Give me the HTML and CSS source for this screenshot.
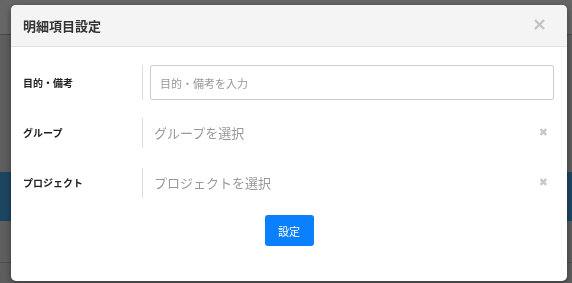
FILE: index.html
```html
<!DOCTYPE html>
<html lang="ja">
<head>
  <meta charset="UTF-8">
  <title>明細項目設定</title>
  <link rel="stylesheet" href="styles.css">
</head>
<body>
  <div class="backdrop">
    <div class="bg-top"></div>
    <div class="bg-gap"></div>
    <div class="bg-band"></div>
    <div class="bg-gap2"></div>
    <div class="bg-line"></div>
  </div>

  <div class="modal">
    <div class="modal-header">
      <h2>明細項目設定</h2>
      <span class="close">×</span>
    </div>
    <div class="modal-body">
      <div class="row">
        <label>目的・備考</label>
        <div class="field">
          <input type="text" placeholder="目的・備考を入力">
        </div>
      </div>
      <div class="row">
        <label>グループ</label>
        <div class="field select">
          <span class="placeholder">グループを選択</span>
          <span class="clear">✖</span>
        </div>
      </div>
      <div class="row">
        <label>プロジェクト</label>
        <div class="field select">
          <span class="placeholder">プロジェクトを選択</span>
          <span class="clear">✖</span>
        </div>
      </div>
      <div class="actions">
        <button>設定</button>
      </div>
    </div>
  </div>
</body>
</html>
```

FILE: styles.css
```css
body {
  margin: 0;
  font-family: "Noto Sans CJK JP", "Noto Sans", sans-serif;
  background: #5e5e5e;
  height: 283px;
  overflow: hidden;
}

.backdrop {
  display: flex;
  flex-direction: column;
}

.bg-top {
  height: 34px;
  border-bottom: 1px solid #4a4a4a;
  background: #666;
}

.bg-gap {
  height: 137px;
}

.bg-band {
  height: 49px;
  background: #1c4660;
}

.bg-gap2 {
  height: 41px;
}

.bg-line {
  height: 1px;
  background: #3c5060;
}

.modal {
  position: fixed;
  left: 11px;
  top: 5px;
  width: 556px;
  height: 276px;
  background: #fff;
  border-radius: 5px;
  box-shadow: 0 2px 6px rgba(0, 0, 0, 0.4);
  overflow: hidden;
}

.modal-header {
  display: flex;
  align-items: center;
  justify-content: space-between;
  height: 41px;
  padding: 0 20px 0 12px;
  background: #f4f4f4;
  border-bottom: 1px solid #e3e3e3;
}

.modal-header h2 {
  margin: 0;
  font-size: 13px;
  font-weight: 700;
  color: #333;
}

.close {
  font-family: "DejaVu Sans", sans-serif;
  font-size: 18px;
  font-weight: 700;
  color: #c2c2c2;
  margin-top: -5px;
}

.modal-body {
  padding: 18px 13px 0 12px;
}

.row {
  display: flex;
  align-items: center;
  height: 35px;
  margin-bottom: 14px;
}

.row + .row {
  padding-top: 1px;
}

.row label {
  width: 119px;
  font-size: 10px;
  font-weight: 700;
  color: #222;
}

.field {
  flex: 1;
  height: 100%;
  display: flex;
  align-items: center;
  border-left: 1px solid #ddd;
  padding-left: 7px;
}

.field input {
  flex: 1;
  height: 35px;
  box-sizing: border-box;
  border: 1px solid #ccc;
  border-radius: 2px;
  padding: 0 9px;
  font-family: inherit;
  font-size: 11px;
  outline: none;
}

.field input::placeholder {
  color: #999;
}

.field.select {
  height: 30px;
  padding-left: 11px;
  justify-content: space-between;
}

.placeholder {
  font-size: 13px;
  color: #999;
}

.clear {
  font-family: "DejaVu Sans", sans-serif;
  font-size: 11px;
  color: #c8c8c8;
  margin-right: 6px;
}

.actions {
  display: flex;
  justify-content: center;
  padding-top: 1px;
}

button {
  background: #0a80ff;
  color: #fff;
  border: none;
  width: 49px;
  height: 31px;
  border-radius: 3px;
  font-family: inherit;
  font-size: 11px;
  margin-left: 1px;
}
```
